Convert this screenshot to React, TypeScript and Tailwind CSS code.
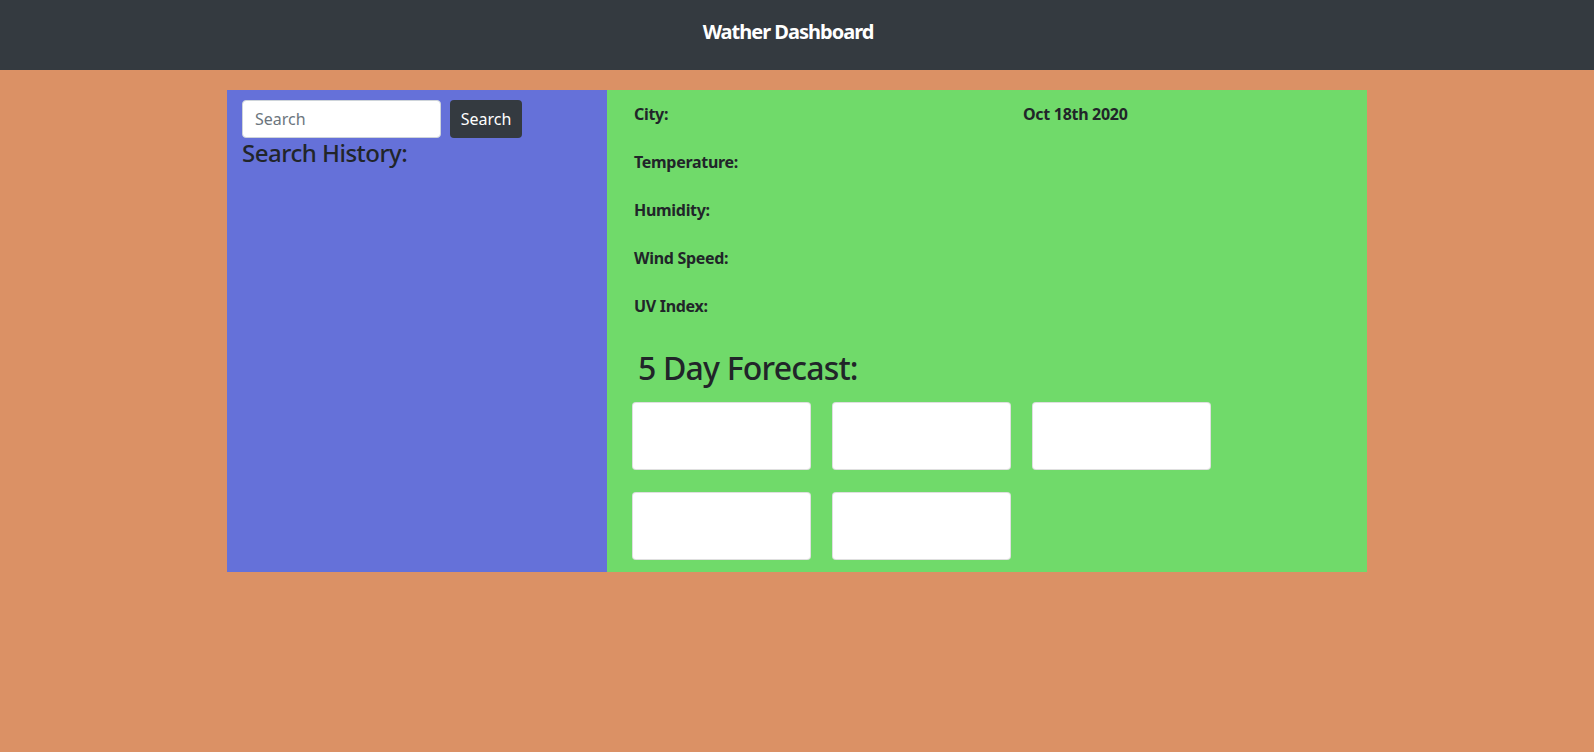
import React from "react";

export default function App() {
  const labels = ["Temperature:", "Humidity:", "Wind Speed:", "UV Index:"];
  return (
    <div className="min-h-[752px] bg-[#db9165] text-[#212529] font-['Noto_Sans',Arial,sans-serif]">
      <header className="h-[70px] bg-[#343a40] flex justify-center pt-[20px] pr-[18px]">
        <h1 className="text-[20px] leading-[24px] font-bold text-white tracking-[-1px]">Wather Dashboard</h1>
      </header>
      <main className="w-[1140px] mx-auto mt-[20px] flex">
        <section className="w-[380px] h-[482px] bg-[#6571d9] px-[15px] pt-[10px]">
          <form className="flex" onSubmit={(e) => e.preventDefault()}>
            <input
              type="text"
              placeholder="Search"
              className="w-[199px] h-[38px] rounded-[4px] border border-[#ced4da] bg-white px-3 text-[16px] placeholder:text-[#6c757d] outline-none"
            />
            <button
              type="submit"
              className="ml-[9px] w-[72px] h-[38px] rounded-[4px] bg-[#343a40] text-white text-[16px]"
            >
              Search
            </button>
          </form>
          <h4 className="text-[24px] leading-[29px] font-medium tracking-[-0.5px]">Search History:</h4>
        </section>
        <section className="flex-1 h-[482px] bg-[#70da6a] pl-[27px] pt-[12px]">
          <div className="grid grid-cols-[389px_1fr] text-[16px] leading-[24px] font-bold tracking-[-0.3px]">
            <div>City:</div>
            <div>Oct 18th 2020</div>
          </div>
          {labels.map((l) => (
            <div key={l} className="mt-[24px] text-[16px] leading-[24px] font-bold tracking-[-0.3px]">
              {l}
            </div>
          ))}
          <h2 className="mt-[31px] pl-[4px] text-[32px] leading-[38px] font-medium tracking-[-0.8px]">5 Day Forecast:</h2>
          <div className="mt-[15px] -ml-[2px] grid grid-cols-[179px_179px_179px] gap-x-[21px] gap-y-[22px]">
            {[0, 1, 2, 3, 4].map((i) => (
              <div key={i} className="h-[68px] bg-white border border-black/[.125] rounded-[4px]" />
            ))}
          </div>
        </section>
      </main>
    </div>
  );
}
